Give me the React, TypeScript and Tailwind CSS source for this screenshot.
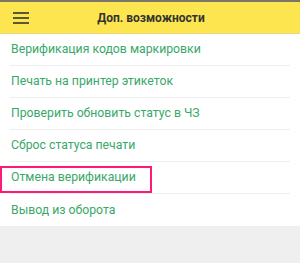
const ITEMS = [
  'Верификация кодов маркировки',
  'Печать на принтер этикеток',
  'Проверить обновить статус в ЧЗ',
  'Сброс статуса печати',
  'Отмена верификации',
  'Вывод из оборота',
];

export default function App() {
  return (
    <div
      className="relative w-[300px] h-[263px] bg-[#efefef] overflow-hidden"
      style={{ fontFamily: 'Roboto, "Noto Sans", sans-serif' }}
    >
      {/* Header */}
      <div className="h-[34px] border-t-2 border-t-[#7a7668] border-b border-b-[#e6d77a] bg-[#fde54f] flex items-center">
        <div className="w-[40px] flex justify-center pl-[1px]">
          <div className="flex flex-col gap-[3px] w-[16px]">
            <div className="h-[2px] bg-[#5b5735]" />
            <div className="h-[2px] bg-[#5b5735]" />
            <div className="h-[2px] bg-[#5b5735]" />
          </div>
        </div>
        <div className="flex-1 text-center pr-[38px] text-[12px] font-bold text-[#333333]">
          Доп. возможности
        </div>
      </div>

      {/* List */}
      <div className="bg-white">
        {ITEMS.map((item, idx) => (
          <div key={idx} className="px-[10px]">
            <div
              className={`h-[32px] flex items-center pl-[1px] text-[12.25px] text-[#3aa86a] ${
                idx < ITEMS.length - 1 ? 'border-b border-[#eeeeee]' : ''
              }`}
            >
              {item}
            </div>
          </div>
        ))}
      </div>

      {/* Highlight annotation */}
      <div className="absolute left-0 top-[166px] w-[152px] h-[27px] border-[2.5px] border-[#ff1a7a]" />
    </div>
  );
}
